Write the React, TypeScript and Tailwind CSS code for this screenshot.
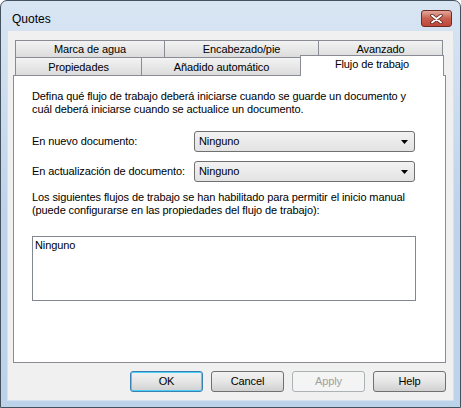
import React from 'react'

const font = { fontFamily: '"Liberation Sans", Arial, sans-serif' }

type TabProps = { label: string; width: string }

// unselected tab face, Win7 style gradient
const Tab = ({ label, width }: TabProps) => (
    <div className={`${width} h-full border border-[#898c95] border-b-0 -ml-px first:ml-0 bg-gradient-to-b from-[#f3f3f3] to-[#dcdcdc] flex items-center justify-center text-[11px] text-black leading-none pt-px`}>
        {label}
    </div>
)

const Combo = () => (
    <div className="w-[221px] h-[21px] rounded-[3px] border border-[#707070] bg-gradient-to-b from-[#f2f2f2] to-[#e3e3e3] flex items-center pl-[4px] pr-[6px]">
        <span className="flex-1 text-[11px] leading-none">Ninguno</span>
        <svg width="7" height="4" viewBox="0 0 7 4"><path d="M0 0h7L3.5 4z" fill="#000" /></svg>
    </div>
)

type BtnProps = { label: string; primary?: boolean; disabled?: boolean }

const DlgButton = ({ label, primary, disabled }: BtnProps) => {
    if (disabled) {
        return (
            <div className="w-[73px] h-[21px] rounded-[3px] border border-[#adb2b5] bg-[#f4f4f4] flex items-center justify-center text-[11px] text-[#a0a0a0]">
                {label}
            </div>
        )
    }
    return (
        <div className={`w-[73px] h-[21px] rounded-[3px] border ${primary ? 'border-[#3c7fb1] shadow-[inset_0_0_0_1px_#48d0f8]' : 'border-[#707070]'} bg-gradient-to-b from-[#f2f2f2] via-[#e6e6e6] to-[#d0d0d0] flex items-center justify-center text-[11px] text-black`}>
            {label}
        </div>
    )
}

export default function App() {
    return (
        <div className="w-[461px] h-[408px] bg-white tracking-[-0.1px]" style={font}>
            <div className="w-full h-full flex flex-col border border-[#44525f] rounded-t-[7px] bg-gradient-to-b from-[#d8e5f3] via-[#bfd4eb] to-[#bcd3ea] px-[6px] pb-[6px]">

                {/* title bar */}
                <div className="h-[29px] flex items-start pl-[5px] pr-[2px]">
                    <span className="flex-1 text-[12px] text-black pt-[12px] leading-none tracking-normal">Quotes</span>
                    <div className="w-[31px] h-[17px] mt-[9px] rounded-[3px] border border-[#6e2c25] bg-gradient-to-b from-[#e3a89d] via-[#c8604f] to-[#c0453a] flex items-center justify-center">
                        <svg width="13" height="10" viewBox="0 0 13 10">
                            <path d="M2 1.5l9 7M11 1.5l-9 7" stroke="#4b1d18" strokeWidth="3.4" strokeLinecap="round" />
                            <path d="M2 1.5l9 7M11 1.5l-9 7" stroke="#fff" strokeWidth="2" strokeLinecap="round" />
                        </svg>
                    </div>
                </div>

                {/* client area */}
                <div className="flex-1 flex flex-col bg-[#f0f0f0] border border-[#d6e2ef] pl-[5px] pr-[7px] pt-[9px] pb-[7px]">

                    {/* tab strip, two rows */}
                    <div className="flex flex-col pl-[2px]">
                        <div className="flex h-[17px]">
                            <Tab label="Marca de agua" width="w-[150px]" />
                            <Tab label="Encabezado/pie" width="w-[155px]" />
                            <Tab label="Avanzado" width="w-[125px]" />
                        </div>
                        <div className="flex h-[18px] items-end">
                            <Tab label="Propiedades" width="w-[127px]" />
                            <Tab label="Añadido automático" width="w-[161px]" />
                            <div className="w-[144px] h-[21px] -ml-[2px] -mb-px relative z-10 border border-[#898c95] border-b-0 bg-white flex items-start justify-center pt-[3px] text-[11px] leading-none">
                                Flujo de trabajo
                            </div>
                        </div>
                    </div>

                    {/* page */}
                    <div className="h-[288px] bg-white border border-[#898c95] pl-[18px] pt-[14px] text-[11px] leading-[13px] text-black">
                        <p className="w-[390px]">
                            Defina qué flujo de trabajo deberá iniciarse cuando se guarde un documento y cuál deberá iniciarse cuando se actualice un documento.
                        </p>

                        <div className="mt-[15px] flex flex-col gap-[9px]">
                            <div className="flex items-center">
                                <span className="w-[162px]">En nuevo documento:</span>
                                <Combo />
                            </div>
                            <div className="flex items-center">
                                <span className="w-[162px]">En actualización de documento:</span>
                                <Combo />
                            </div>
                        </div>

                        <p className="mt-[9px] w-[400px]">
                            Los siguientes flujos de trabajo se han habilitado para permitir el inicio manual (puede configurarse en las propiedades del flujo de trabajo):
                        </p>

                        <div className="mt-[19px] w-[384px] h-[65px] border border-[#828790] bg-white px-[2px] pt-[2px]">
                            Ninguno
                        </div>
                    </div>

                    {/* dialog buttons */}
                    <div className="mt-[8px] flex justify-end gap-[8px]">
                        <DlgButton label="OK" primary />
                        <DlgButton label="Cancel" />
                        <DlgButton label="Apply" disabled />
                        <DlgButton label="Help" />
                    </div>
                </div>
            </div>
        </div>
    )
}
